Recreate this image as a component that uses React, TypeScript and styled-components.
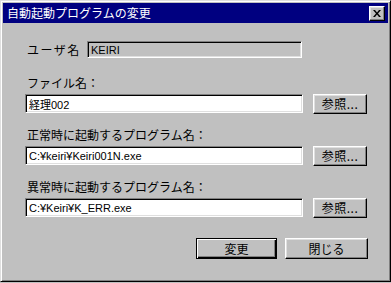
import styled, { createGlobalStyle } from 'styled-components';

const GlobalStyle = createGlobalStyle`
  body {
    margin: 0;
    background: #c0c0c0;
    font-family: "Noto Sans CJK JP", "Liberation Sans", sans-serif;
  }
`;

const Window = styled.div`
  box-sizing: border-box;
  width: 391px;
  height: 282px;
  padding: 2px;
  background: #c0c0c0;
  border-style: solid;
  border-width: 1px;
  border-color: #dfdfdf #000 #000 #dfdfdf;
  box-shadow: inset 1px 1px #fff, inset -1px -1px #808080;
  display: flex;
  flex-direction: column;
`;

const TitleBar = styled.div`
  height: 20px;
  background: #000080;
  display: flex;
  align-items: center;
  justify-content: space-between;
  padding: 0 3px 0 4px;
`;

const TitleText = styled.span`
  color: #fff;
  font-size: 12px;
  line-height: 20px;
`;

const Bevel = styled.button`
  box-sizing: border-box;
  background: #c0c0c0;
  border-style: solid;
  border-width: 1px;
  border-color: #fff #000 #000 #fff;
  box-shadow: inset -1px -1px #808080, inset 1px 1px #dfdfdf;
  padding: 0;
  font-family: "Noto Sans CJK JP", sans-serif;
  font-size: 12px;
  color: #000;
  display: flex;
  align-items: center;
  justify-content: center;
`;

const CloseButton = styled(Bevel)`
  width: 16px;
  height: 15px;
`;

const Body = styled.div`
  padding: 18px 20px 0 22px;
  display: flex;
  flex-direction: column;
`;

const UserRow = styled.div`
  display: flex;
  align-items: center;
  height: 17px;
`;

const UserLabel = styled.span`
  width: 62px;
  font-size: 12px;
  letter-spacing: 1.5px;
  padding-left: 2px;
  box-sizing: border-box;
`;

const Field = styled.div<{ $readonly?: boolean }>`
  box-sizing: border-box;
  background: ${(p) => (p.$readonly ? '#c0c0c0' : '#fff')};
  border-style: solid;
  border-width: 1px;
  border-color: #808080 #fff #fff #808080;
  box-shadow: inset 1px 1px #000, inset -1px -1px #dfdfdf;
  font-family: "Liberation Sans", "Noto Sans CJK JP", sans-serif;
  font-size: 11px;
  padding: 0 3px;
  display: flex;
  align-items: center;
  white-space: nowrap;
`;

const UserField = styled(Field)`
  width: 215px;
  height: 17px;
`;

const Section = styled.div<{ $gap: number }>`
  margin-top: ${(p) => p.$gap}px;
  display: flex;
  flex-direction: column;
  gap: 3px;
`;

const Label = styled.span`
  font-size: 12px;
  line-height: 16px;
  padding-left: 2px;
`;

const InputRow = styled.div`
  display: flex;
  align-items: center;
  gap: 10px;
  height: 19px;
`;

const PathField = styled(Field)`
  width: 278px;
  height: 19px;
`;

const BrowseButton = styled(Bevel)`
  width: 54px;
  height: 20px;
  letter-spacing: 0.5px;
`;

const Footer = styled.div`
  margin-top: 21px;
  display: flex;
  justify-content: flex-end;
  gap: 8px;
`;

const ActionButton = styled(Bevel)<{ $default?: boolean }>`
  width: ${(p) => (p.$default ? 81 : 83)}px;
  height: 21px;
  ${(p) =>
    p.$default &&
    `
    border-color: #000;
    box-shadow: inset 1px 1px #fff, inset -1px -1px #000, inset -2px -2px #808080;
  `}
`;

const sections = [
  { label: 'ファイル名：', value: '経理002', gap: 17 },
  { label: '正常時に起動するプログラム名：', value: 'C:¥keiri¥Keiri001N.exe', gap: 14 },
  { label: '異常時に起動するプログラム名：', value: 'C:¥Keiri¥K_ERR.exe', gap: 14 },
];

export default function App() {
  return (
    <>
      <GlobalStyle />
      <Window>
        <TitleBar>
          <TitleText>自動起動プログラムの変更</TitleText>
          <CloseButton aria-label="close">
            <svg width="8" height="7" viewBox="0 0 8 7">
              <path d="M0 0h2l2 2.5L6 0h2L5 3.5 8 7H6L4 4.5 2 7H0l3-3.5z" fill="#000" />
            </svg>
          </CloseButton>
        </TitleBar>
        <Body>
          <UserRow>
            <UserLabel>ユーザ名</UserLabel>
            <UserField $readonly>KEIRI</UserField>
          </UserRow>
          {sections.map((s) => (
            <Section key={s.label} $gap={s.gap}>
              <Label>{s.label}</Label>
              <InputRow>
                <PathField>{s.value}</PathField>
                <BrowseButton>参照...</BrowseButton>
              </InputRow>
            </Section>
          ))}
          <Footer>
            <ActionButton $default>変更</ActionButton>
            <ActionButton>閉じる</ActionButton>
          </Footer>
        </Body>
      </Window>
    </>
  );
}
